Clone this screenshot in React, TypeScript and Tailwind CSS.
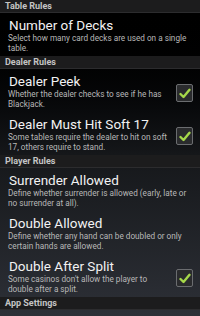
import React from "react";

interface Pref {
  title: string;
  summary: string;
  checked?: boolean;
}

interface Group {
  name: string;
  items: Pref[];
}

const groups: Group[] = [
  {
    name: "Table Rules",
    items: [
      {
        title: "Number of Decks",
        summary: "Select how many card decks are used on a single table.",
      },
    ],
  },
  {
    name: "Dealer Rules",
    items: [
      {
        title: "Dealer Peek",
        summary: "Whether the dealer checks to see if he has Blackjack.",
        checked: true,
      },
      {
        title: "Dealer Must Hit Soft 17",
        summary: "Some tables require the dealer to hit on soft 17, others require to stand.",
        checked: true,
      },
    ],
  },
  {
    name: "Player Rules",
    items: [
      {
        title: "Surrender Allowed",
        summary: "Define whether surrender is allowed (early, late or no surrender at all).",
      },
      {
        title: "Double Allowed",
        summary: "Define whether any hand can be doubled or only certain hands are allowed.",
      },
      {
        title: "Double After Split",
        summary: "Some casinos don't allow the player to double after a split.",
        checked: true,
      },
    ],
  },
  { name: "App Settings", items: [] },
];

function CheckBox() {
  return (
    <div className="w-[17px] h-[18px] shrink-0 rounded-[2px] border-[1.5px] border-[#6b6d70] bg-[#2a2b2d] flex items-center justify-center">
      <svg width="12" height="11" viewBox="0 0 12 11">
        <path
          d="M1.5 6 L4.5 9 L10.5 1.8"
          fill="none"
          stroke="#a6d84a"
          strokeWidth="2.4"
          strokeLinecap="round"
          strokeLinejoin="round"
        />
      </svg>
    </div>
  );
}

function PrefRow({ title, summary, checked }: Pref) {
  return (
    <div className="flex items-center h-[43px] pl-[8px] pr-[7px]">
      <div className="flex-1 min-w-0 pt-[1px]">
        <p className="text-[13.5px] leading-[16px] text-[#f2f2f2] pl-[1px]">{title}</p>
        <p className="text-[8.2px] leading-[10px] text-[#b8b8b8]">{summary}</p>
      </div>
      {checked && (
        <div className="pt-[5px] pl-[3px]">
          <CheckBox />
        </div>
      )}
    </div>
  );
}

export default function App() {
  return (
    <div
      className="w-[200px] h-[316px] overflow-hidden bg-gradient-to-b from-[#000000] via-[#16181b] to-[#2d3037]"
      style={{ fontFamily: "Roboto, 'Noto Sans', sans-serif" }}
    >
      {groups.map((g) => (
        <div key={g.name}>
          <div className="h-[13px] flex items-center px-[5px] bg-[#1c1c1d] border-b border-[#2c2c2e]">
            <span className="text-[9px] font-bold text-[#c4c4c4] leading-none">{g.name}</span>
          </div>
          {g.items.map((it) => (
            <PrefRow key={it.title} {...it} />
          ))}
        </div>
      ))}
    </div>
  );
}
